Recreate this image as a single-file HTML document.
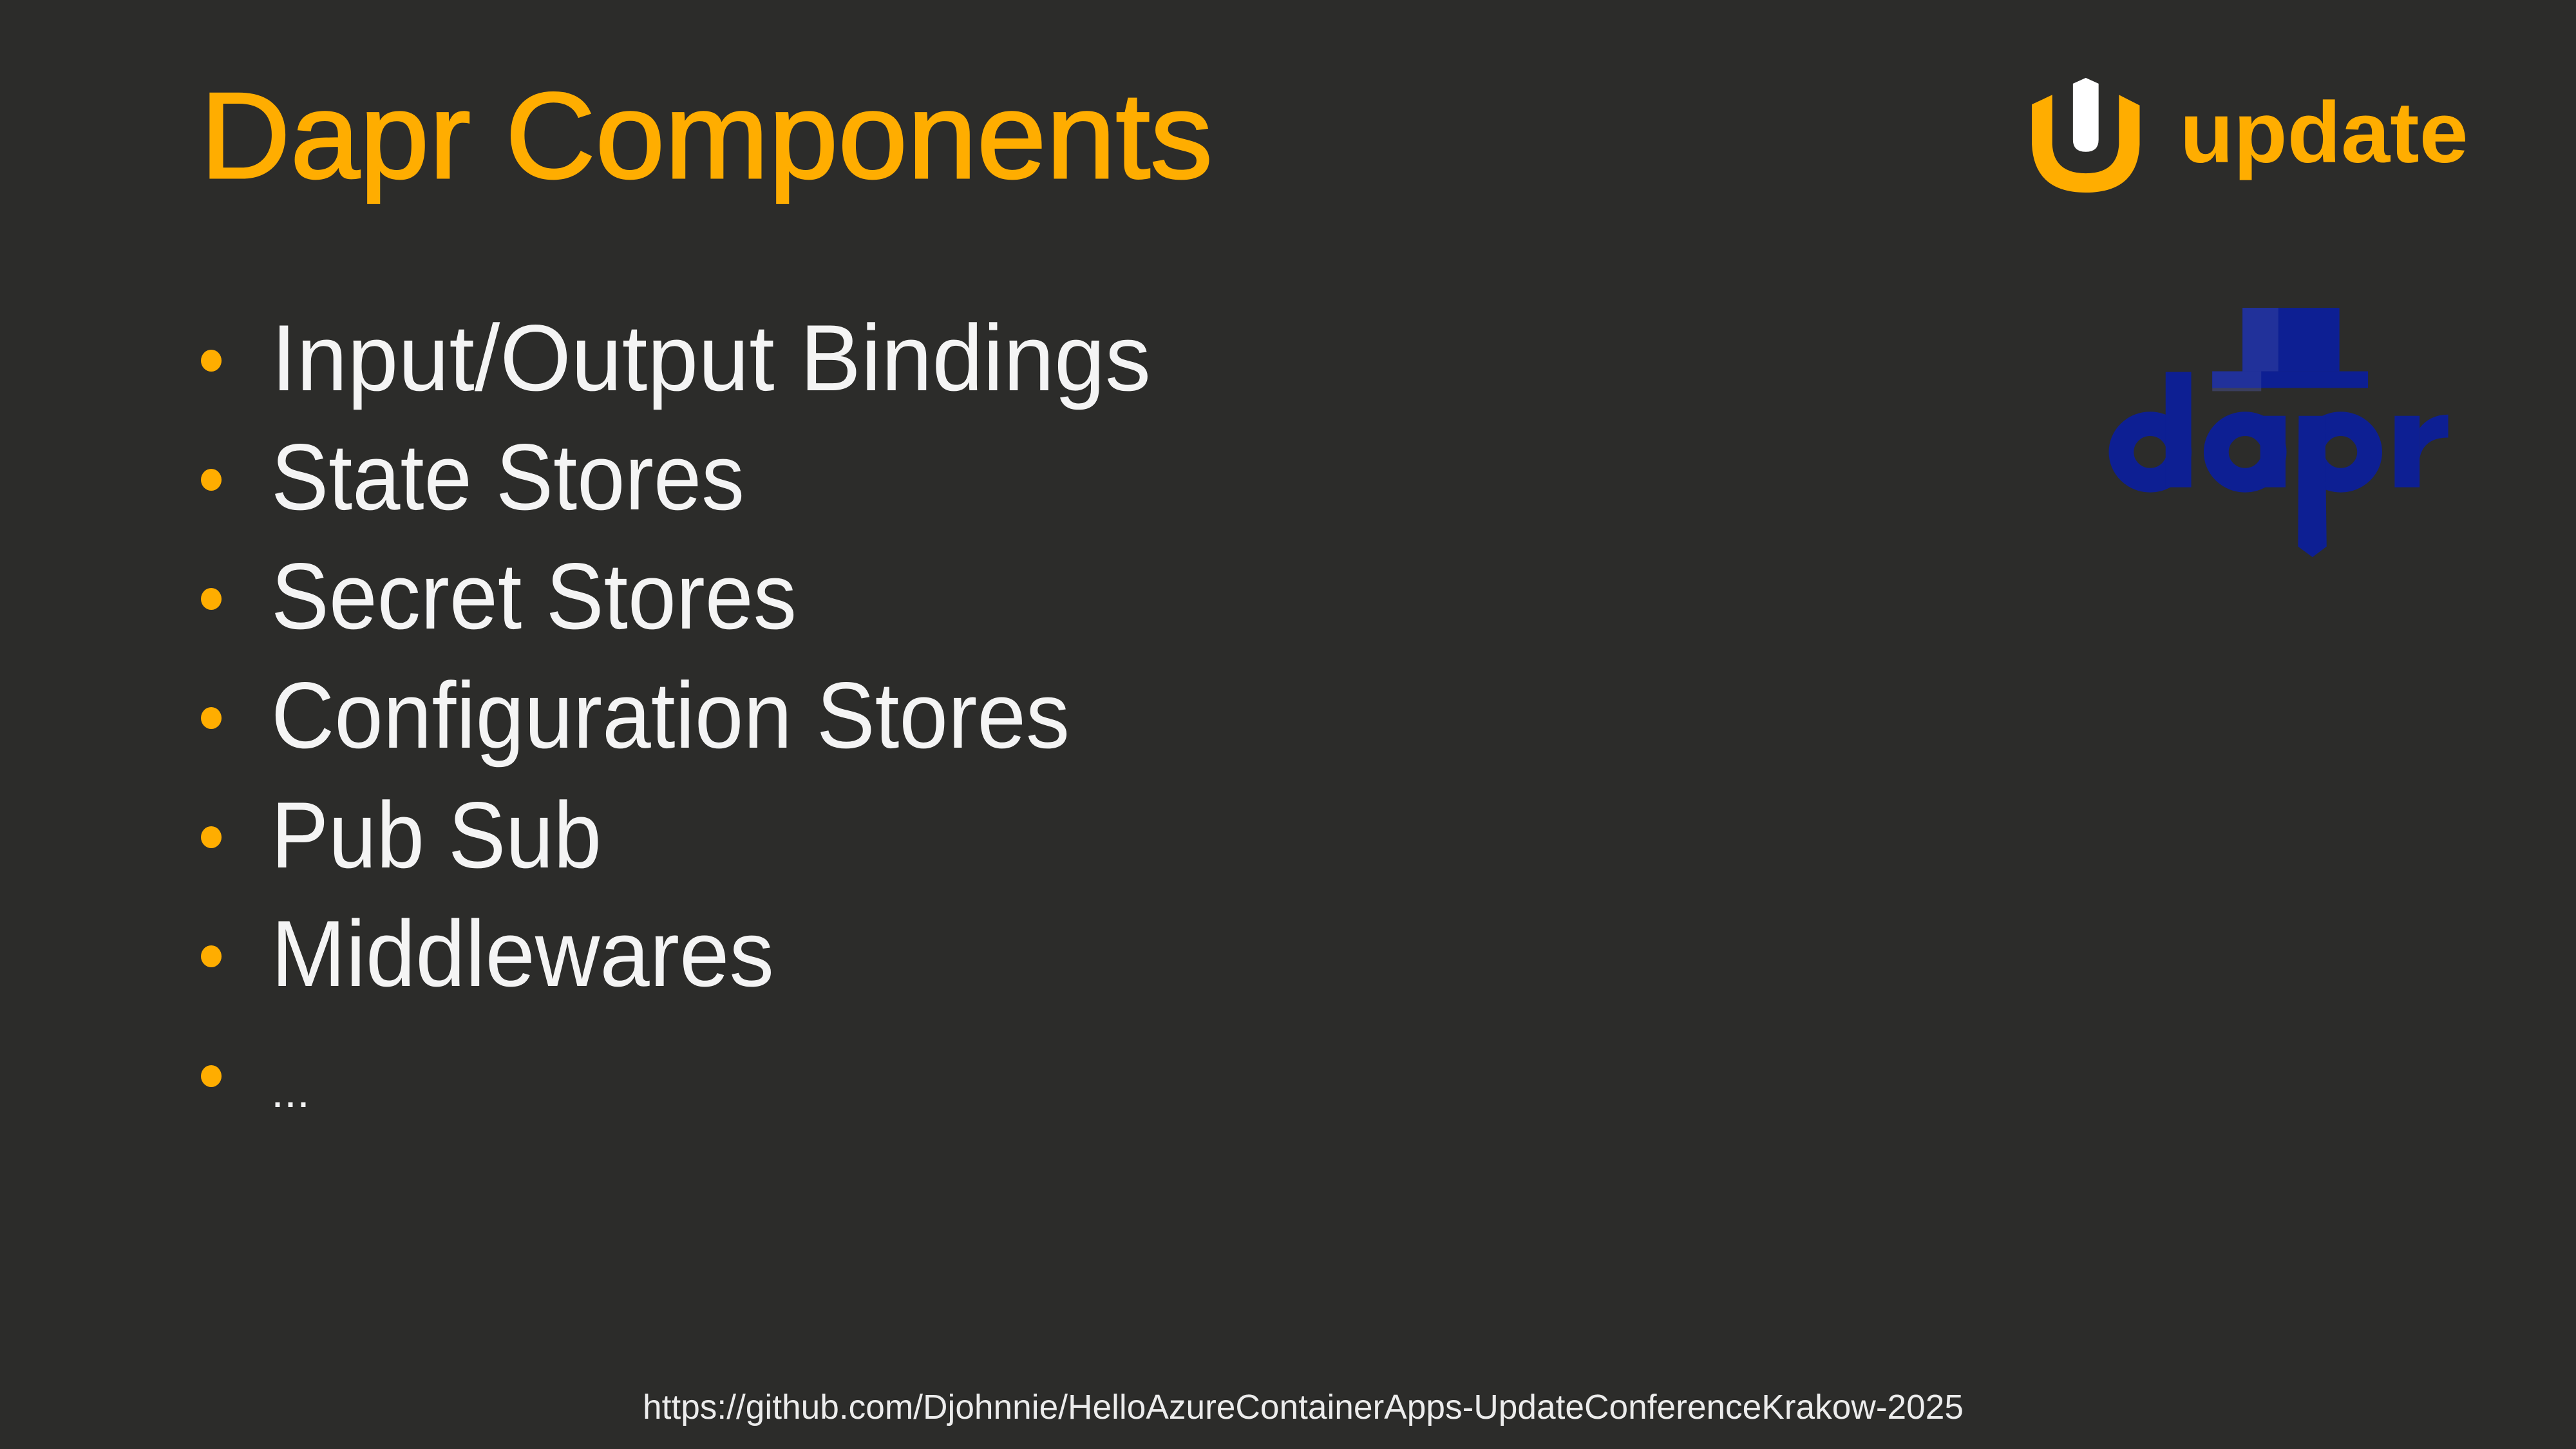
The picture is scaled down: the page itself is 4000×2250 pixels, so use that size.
<!DOCTYPE html>
<html><head><meta charset="utf-8">
<style>
html,body{margin:0;padding:0;background:#2c2c2a;}
body{width:4000px;height:2250px;overflow:hidden;position:relative;}
svg{position:absolute;left:0;top:0;}
</style></head>
<body>
<svg width="4000" height="2250" viewBox="0 0 4000 2250" xmlns="http://www.w3.org/2000/svg">
<rect width="4000" height="2250" fill="#2c2c2a"/>
<text x="311" y="276" font-family="Liberation Sans, sans-serif" font-size="190" fill="#ffad00" stroke="#ffad00" stroke-width="3" textLength="1572" lengthAdjust="spacingAndGlyphs">Dapr Components</text>
<g font-family="Liberation Sans, sans-serif" font-size="146" fill="#f4f4f4">
<text x="421" y="606" textLength="1366" lengthAdjust="spacingAndGlyphs">Input/Output Bindings</text>
<text x="421" y="791" textLength="735" lengthAdjust="spacingAndGlyphs">State Stores</text>
<text x="421" y="976" textLength="816" lengthAdjust="spacingAndGlyphs">Secret Stores</text>
<text x="421" y="1161" textLength="1240" lengthAdjust="spacingAndGlyphs">Configuration Stores</text>
<text x="421" y="1347" textLength="513" lengthAdjust="spacingAndGlyphs">Pub Sub</text>
<text x="421" y="1531" textLength="781" lengthAdjust="spacingAndGlyphs">Middlewares</text>
<text x="421" y="1719" font-size="70" textLength="60" lengthAdjust="spacingAndGlyphs">...</text>
</g>
<g fill="#ffad00">
<ellipse cx="328" cy="560" rx="16" ry="17"/>
<ellipse cx="328" cy="745" rx="16" ry="17"/>
<ellipse cx="328" cy="930" rx="16" ry="17"/>
<ellipse cx="328" cy="1115" rx="16" ry="17"/>
<ellipse cx="328" cy="1300" rx="16" ry="17"/>
<ellipse cx="328" cy="1485" rx="16" ry="17"/>
<ellipse cx="328" cy="1671" rx="16" ry="17"/>
</g>
<text x="998" y="2203" font-family="Liberation Sans, sans-serif" font-size="54" fill="#ececec" textLength="2051" lengthAdjust="spacingAndGlyphs">https://github.com/Djohnnie/HelloAzureContainerApps-UpdateConferenceKrakow-2025</text>
</svg>
<svg style="left:3100px;top:100px" width="800" height="780" viewBox="0 0 1568 1568" preserveAspectRatio="none" xmlns="http://www.w3.org/2000/svg">
<path d="M108,125 L170,95 L170,250 Q175,340 272,340 Q368,340 373,250 L373,95 L436,128 L436,250 Q430,400 272,400 Q115,400 108,250 Z" fill="#ffad00"/>
<path d="M233,60 L272,42 L311,60 L311,235 Q311,273 272,273 Q233,273 233,235 Z" fill="#ffffff"/>
<text x="558" y="305" font-family="Liberation Sans, sans-serif" font-weight="bold" font-size="270" fill="#ffad00" textLength="878" lengthAdjust="spacingAndGlyphs">update</text>
<g fill="#0d1f93">
<rect x="749" y="760" width="295" height="198"/>
<rect x="657" y="958" width="474" height="52"/>
</g>
<rect x="749" y="760" width="109" height="198" fill="#21319a"/>
<rect x="657" y="958" width="149" height="52" fill="#21319a"/>
<rect x="657" y="1010" width="149" height="10" fill="#3b3e5c"/>
<g fill="none" stroke="#0d1f93" stroke-width="76">
<circle cx="468" cy="1210" r="88"/>
<circle cx="757" cy="1210" r="88"/>
<circle cx="1048" cy="1210" r="88"/>
</g>
<g fill="#0d1f93">
<rect x="515" y="960" width="78" height="360"/>
<rect x="803" y="1097" width="77" height="223"/>
<path d="M920,1097 L1000,1097 L1005,1505 L962,1538 L918,1505 Z"/>
<rect x="1212" y="1097" width="76" height="223"/>
<path d="M1288,1135 Q1320,1093 1375,1093 L1375,1165 Q1300,1165 1288,1230 Z"/>
</g>
</svg>
</body></html>
